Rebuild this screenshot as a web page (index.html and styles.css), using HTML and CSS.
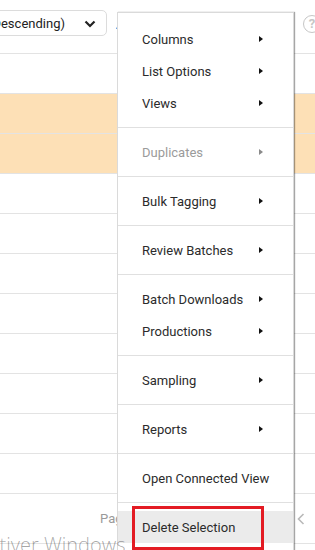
FILE: index.html
```html
<!DOCTYPE html>
<html>
<head>
    <link rel="stylesheet" href="styles.css">
</head>
<body>
    <div class="page">
        <div class="toolbar">
            <div class="sort-select">
                <span>(Descending)</span>
                <svg class="chevron" width="12" height="8" viewBox="0 0 12 8"><path d="M1.5 1.5 L6 6 L10.5 1.5" fill="none" stroke="#222" stroke-width="2.2"/></svg>
            </div>
            <svg class="blue-icon" width="10" height="10" viewBox="0 0 10 10"><path d="M1 9 L4 2 L6 9 Z" fill="#4a8ee0"/></svg>
            <div class="help">?</div>
        </div>

        <div class="rows">
            <div class="row"></div>
            <div class="row selected"></div>
            <div class="row selected"></div>
            <div class="row"></div>
            <div class="row"></div>
            <div class="row"></div>
            <div class="row"></div>
            <div class="row"></div>
            <div class="row"></div>
            <div class="row"></div>
            <div class="row"></div>
        </div>

        <div class="pager">
            <span class="page-label">Page</span>
            <svg class="prev" width="8" height="12" viewBox="0 0 8 12"><path d="M6.5 1 L1.5 6 L6.5 11" fill="none" stroke="#b9b9b9" stroke-width="1.6"/></svg>
        </div>

        <div class="menu">
            <div class="menu-group">
                <div class="menu-item">Columns <span class="arrow"></span></div>
                <div class="menu-item">List Options <span class="arrow"></span></div>
                <div class="menu-item">Views <span class="arrow"></span></div>
            </div>
            <div class="menu-group">
                <div class="menu-item disabled">Duplicates <span class="arrow"></span></div>
            </div>
            <div class="menu-group">
                <div class="menu-item">Bulk Tagging <span class="arrow"></span></div>
            </div>
            <div class="menu-group">
                <div class="menu-item">Review Batches <span class="arrow"></span></div>
            </div>
            <div class="menu-group">
                <div class="menu-item">Batch Downloads <span class="arrow"></span></div>
                <div class="menu-item">Productions <span class="arrow"></span></div>
            </div>
            <div class="menu-group">
                <div class="menu-item">Sampling <span class="arrow"></span></div>
            </div>
            <div class="menu-group">
                <div class="menu-item">Reports <span class="arrow"></span></div>
            </div>
            <div class="menu-group">
                <div class="menu-item">Open Connected View</div>
            </div>
            <div class="menu-group">
                <div class="menu-item hover">Delete Selection
                    <div class="highlight-box"></div>
                </div>
            </div>
        </div>

        <div class="watermark">Activer Windows</div>
    </div>
</body>
</html>
```

FILE: styles.css
```css
body {
    margin: 0;
    font-family: Roboto, "Liberation Sans", Arial, sans-serif;
    background: #fff;
    color: #333;
}

.page {
    position: relative;
    width: 315px;
    height: 550px;
    overflow: hidden;
}

.toolbar {
    display: flex;
    align-items: flex-start;
    height: 54px;
    padding-top: 10px;
    box-sizing: border-box;
    border-bottom: 1px solid #e3e3e3;
}

.sort-select {
    display: flex;
    align-items: center;
    justify-content: space-between;
    width: 147px;
    height: 26px;
    margin-left: -40px;
    padding: 0 10px 0 27px;
    box-sizing: border-box;
    border: 1px solid #dcdcdc;
    border-radius: 5px;
    font-size: 13px;
    color: #222;
}

.chevron {
    margin-top: 1px;
}

.blue-icon {
    margin: 10px 0 0 8px;
}

.help {
    width: 16px;
    height: 16px;
    margin: 5px -6px 0 auto;
    border: 1.5px solid #c6c6c6;
    border-radius: 50%;
    color: #c6c6c6;
    font-size: 13px;
    font-weight: bold;
    line-height: 16px;
    text-align: center;
}

.row {
    height: 40px;
    box-sizing: border-box;
    border-bottom: 1px solid #e3e3e3;
}

.row.selected {
    background: #fde0b6;
}

.pager {
    display: flex;
    align-items: center;
    height: 50px;
    padding-left: 100px;
    box-sizing: border-box;
    border-bottom: 1px solid #e3e3e3;
    font-size: 13px;
    color: #9a9a9a;
}

.prev {
    margin-left: auto;
    margin-right: 10px;
}

.menu {
    position: absolute;
    left: 117px;
    top: 12px;
    width: 177px;
    height: 560px;
    padding-top: 1px;
    box-sizing: border-box;
    background: #fff;
    border: 1px solid #dadada;
    box-shadow: 1px 0 1px rgba(0, 0, 0, 0.35);
}

.menu-group {
    padding: 8px 0;
    border-top: 1px solid #e0e0e0;
}

.menu-group:first-child {
    padding-top: 9px;
    border-top: none;
}

.menu-item {
    position: relative;
    display: flex;
    align-items: center;
    justify-content: space-between;
    height: 32px;
    padding: 0 30px 0 24px;
    font-size: 13px;
    color: #2b2b2b;
    white-space: nowrap;
}

.menu-item.disabled {
    color: #9b9b9b;
}

.menu-item.hover {
    background: #ebebeb;
}

.arrow {
    width: 0;
    height: 0;
    border-left: 4px solid #111;
    border-top: 3px solid transparent;
    border-bottom: 3px solid transparent;
}

.disabled .arrow {
    border-left-color: #8a8a8a;
}

.highlight-box {
    position: absolute;
    left: 14px;
    top: -5px;
    width: 132px;
    height: 44px;
    box-sizing: border-box;
    border: 3px solid #e31b23;
}

.watermark {
    position: absolute;
    left: -22px;
    top: 535px;
    font-family: "Open Sans", "Noto Sans", sans-serif;
    font-weight: 300;
    font-size: 20px;
    line-height: 1;
    color: rgba(0, 0, 0, 0.35);
    white-space: nowrap;
}
```
